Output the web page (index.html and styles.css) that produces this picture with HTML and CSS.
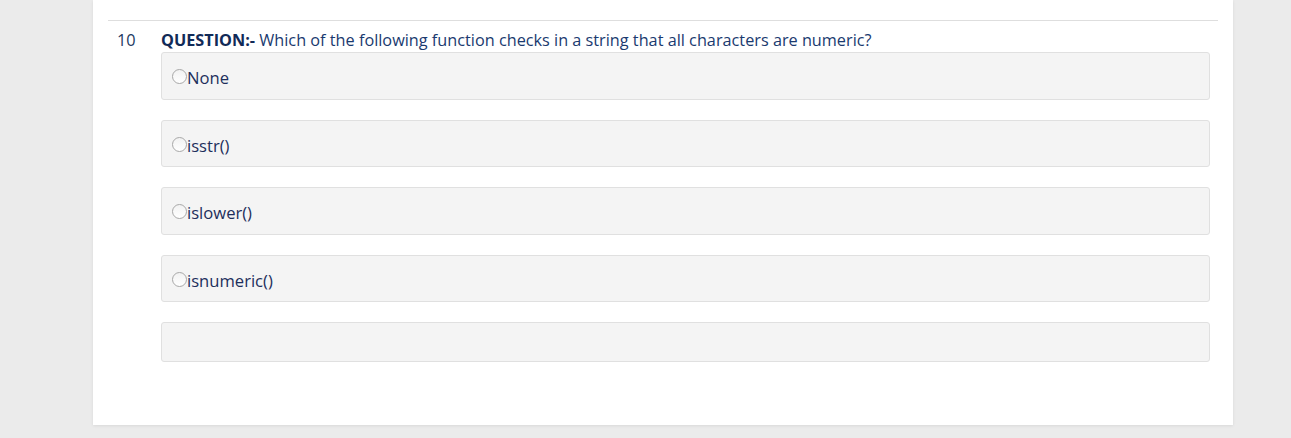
FILE: index.html
```html
<!DOCTYPE html>
<html>
<head>
<meta charset="utf-8">
<link rel="stylesheet" href="styles.css">
</head>
<body>
<div class="card">
  <hr class="rule">
  <div class="row">
    <div class="num">10</div>
    <div class="body">
      <div class="question"><b>QUESTION:-</b> Which of the following function checks in a string that all characters are numeric?</div>
      <div class="option"><label><input type="radio" name="q10">None</label></div>
      <div class="option"><label><input type="radio" name="q10">isstr()</label></div>
      <div class="option"><label><input type="radio" name="q10">islower()</label></div>
      <div class="option"><label><input type="radio" name="q10">isnumeric()</label></div>
      <div class="option empty"></div>
    </div>
  </div>
</div>
</body>
</html>
```
FILE: styles.css
```css
html, body {
  margin: 0;
  padding: 0;
}
body {
  background: #ebebeb;
  font-family: "Open Sans", "Liberation Sans", sans-serif;
  font-size: 16.25px;
  line-height: 22px;
  color: #1c3463;
  height: 438px;
  overflow: hidden;
}
.card {
  margin-left: 93px;
  width: 1110px;
  padding: 20px 15px 0;
  background: #fff;
  box-shadow: 0 1px 3px rgba(0,0,0,0.08);
  box-sizing: content-box;
  height: 405px;
}
.rule {
  margin: 0;
  border: 0;
  border-top: 1px solid #dedede;
}
.row {
  display: flex;
  padding-top: 8px;
}
.num {
  flex: none;
  width: 28px;
  padding: 0 8px 0 9px;
  color: #22385f;
}
.body {
  flex: 1;
  padding: 0 8px;
}
.question {
  color: #1a3a6f;
  margin-bottom: 1px;
}
.question b {
  color: #112a57;
}
.option {
  background: #f4f4f4;
  border: 1px solid #e0e0e0;
  border-radius: 3px;
  height: 45.5px;
  margin-bottom: 20px;
  box-sizing: content-box;
  color: #1d2f5c;
  font-size: 16.6px;
}
.option label {
  display: flex;
  align-items: flex-start;
  padding: 14px 0 0 10px;
}
.option input {
  appearance: none;
  -webkit-appearance: none;
  margin: 2px 0 0 0;
  width: 15px;
  height: 15px;
  border: 1px solid #a8a8a8;
  border-radius: 50%;
  background: linear-gradient(#f2f2f2, #ffffff);
  box-sizing: border-box;
  flex: none;
}
.option.empty {
  height: 38px;
}
```
